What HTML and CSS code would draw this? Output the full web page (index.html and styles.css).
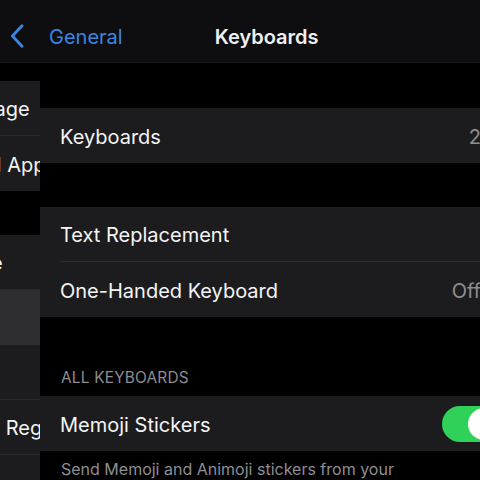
FILE: index.html
```html
<!DOCTYPE html>
<html lang="en">
<head>
<meta charset="utf-8">
<title>Keyboards</title>
<link rel="stylesheet" href="styles.css">
</head>
<body>
<div class="screen">
  <header class="nav">
    <svg class="back-icon" width="14" height="24" viewBox="0 0 14 24" aria-hidden="true">
      <path d="M12 1.8 L2.4 12 L12 22.2" fill="none" stroke="#3a86e0" stroke-width="2.8" stroke-linecap="round" stroke-linejoin="round"/>
    </svg>
    <span class="back-label">General</span>
    <span class="nav-title">Keyboards</span>
  </header>
  <div class="body">
    <aside class="sidebar">
      <div class="sidebar-inner">
        <div class="sgroup">
          <div class="srow storage"><span class="stext">iPad Storage</span></div>
          <div class="srow"><span class="stext">Background App Refresh</span></div>
        </div>
        <div class="sgroup">
          <div class="srow"><span class="stext">Date &amp; Time</span></div>
          <div class="srow selected"><span class="stext">Keyboard</span></div>
          <div class="srow"><span class="stext">Fonts</span></div>
          <div class="srow"><span class="stext">Language &amp; Region</span></div>
          <div class="srow"><span class="stext">Dictionary</span></div>
        </div>
      </div>
    </aside>
    <main class="detail">
      <section class="group">
        <div class="row">
          <div class="row-inner">
            <span class="label">Keyboards</span>
            <span class="value">2</span>
            <svg class="chev" width="9" height="15" viewBox="0 0 9 15" aria-hidden="true"><path d="M1.5 1.5 L7.5 7.5 L1.5 13.5" fill="none" stroke="#5a5a5f" stroke-width="2" stroke-linecap="round" stroke-linejoin="round"/></svg>
          </div>
        </div>
      </section>
      <section class="group">
        <div class="row">
          <div class="row-inner">
            <span class="label">Text Replacement</span>
            <svg class="chev" width="9" height="15" viewBox="0 0 9 15" aria-hidden="true"><path d="M1.5 1.5 L7.5 7.5 L1.5 13.5" fill="none" stroke="#5a5a5f" stroke-width="2" stroke-linecap="round" stroke-linejoin="round"/></svg>
          </div>
        </div>
        <div class="row">
          <div class="row-inner">
            <span class="label">One-Handed Keyboard</span>
            <span class="value">Off</span>
            <svg class="chev" width="9" height="15" viewBox="0 0 9 15" aria-hidden="true"><path d="M1.5 1.5 L7.5 7.5 L1.5 13.5" fill="none" stroke="#5a5a5f" stroke-width="2" stroke-linecap="round" stroke-linejoin="round"/></svg>
          </div>
        </div>
      </section>
      <div class="group-header">ALL KEYBOARDS</div>
      <section class="group">
        <div class="row">
          <div class="row-inner">
            <span class="label">Memoji Stickers</span>
            <span class="toggle on"><span class="knob"></span></span>
          </div>
        </div>
      </section>
      <p class="footer">Send Memoji and Animoji stickers from your keyboard.</p>
    </main>
  </div>
</div>
</body>
</html>
```

FILE: styles.css
```css
html, body {
  margin: 0;
  padding: 0;
  background: #000;
}

.screen {
  width: 480px;
  height: 480px;
  overflow: hidden;
  background: #000;
  font-family: Inter, "Noto Sans", "Liberation Sans", sans-serif;
  color: #f4f4f6;
}

.nav {
  height: 63px;
  box-sizing: border-box;
  padding: 11px 0 0 10px;
  display: flex;
  align-items: center;
  background: #0e0e10;
  border-bottom: 1px solid #141416;
}

.back-icon {
  display: block;
  flex: none;
  margin-top: -2px;
}

.back-label {
  margin-left: 25px;
  font-size: 20px;
  color: #3a86e0;
  white-space: nowrap;
}

.nav-title {
  margin-left: 92px;
  font-size: 20px;
  font-weight: 600;
  color: #f0f0f2;
  white-space: nowrap;
}

.body {
  display: grid;
  grid-template-columns: 40px 478px;
}

.sidebar {
  overflow: hidden;
  padding-top: 18px;
}

.sidebar-inner {
  width: 320px;
  margin-left: -280px;
  display: flex;
  flex-direction: column;
  gap: 44px;
}

.srow {
  height: 55px;
  box-sizing: border-box;
  display: flex;
  align-items: center;
  padding: 2px 0 0 168px;
  background: #1c1c1e;
  border-bottom: 1px solid #2a2a2d;
  font-size: 20px;
  white-space: nowrap;
}

.srow.storage {
  padding-left: 189px;
}

.srow:last-child {
  border-bottom: none;
}

.srow.selected {
  background: #2e2e31;
  border-bottom-color: #2e2e31;
}

.detail {
  padding-top: 45px;
}

.group {
  background: #1c1c1e;
  margin-bottom: 44px;
}

.row {
  padding-left: 20px;
}

.row-inner {
  height: 55px;
  box-sizing: border-box;
  display: flex;
  align-items: center;
  padding: 2px 16px 0 0;
  border-bottom: 1px solid #2c2c2f;
}

.row:last-child .row-inner {
  border-bottom: none;
}

.label {
  flex: 1;
  font-size: 20px;
  white-space: nowrap;
}

.value {
  font-size: 20px;
  color: #8e8e93;
  margin-right: 12px;
}

.chev {
  display: block;
  flex: none;
}

.group-header {
  margin-top: -44px;
  padding: 52px 0 9px 21px;
  font-size: 15.4px;
  line-height: 18px;
  color: #8d8d93;
  letter-spacing: 0.2px;
}

.toggle {
  width: 60px;
  height: 36px;
  margin-top: -2px;
  border-radius: 18px;
  background: #30d158;
  display: flex;
  align-items: center;
  justify-content: flex-end;
  padding: 2px;
  box-sizing: border-box;
}

.knob {
  width: 32px;
  height: 32px;
  border-radius: 50%;
  background: #fff;
}

.footer {
  margin: -44px 0 0;
  padding: 8px 90px 0 21px;
  font-size: 16px;
  line-height: 20px;
  color: #8e8e93;
}
```
